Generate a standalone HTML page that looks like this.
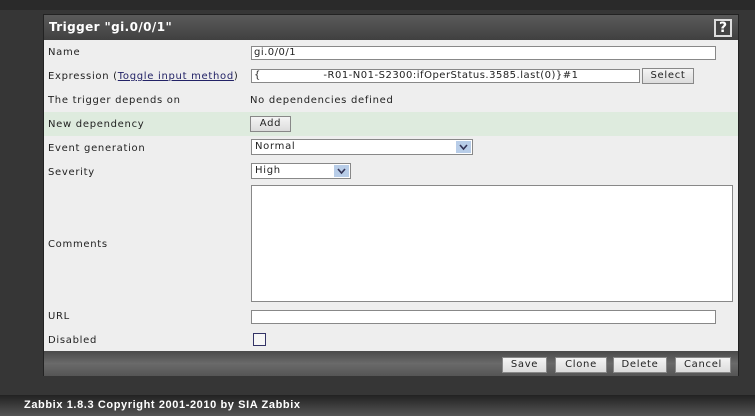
<!DOCTYPE html>
<html><head><style>
*{margin:0;padding:0;box-sizing:border-box}
body{width:755px;height:416px;background:#363636;font-family:"DejaVu Sans","Liberation Sans",sans-serif;font-size:10px;color:#222;position:relative;overflow:hidden;letter-spacing:0.7px}
.a{position:absolute}
.top{left:0;top:0;width:755px;height:10px;background:#2a2a2a}
.panel{left:43px;top:14px;width:696px;height:362px;background:#eee;border:1px solid #222}
.hdr{left:0;top:0;width:694px;height:25px;background:linear-gradient(#5a5a5a,#404040);color:#fff;font-weight:bold;font-size:12px;padding:5px 0 0 5px;letter-spacing:0.4px}
.help{right:6px;top:4px;width:18px;height:18px;border:2px solid #ddd;color:#fff;font-size:14px;font-weight:bold;text-align:center;line-height:14px;background:#444;letter-spacing:0}
.lbl{left:4px}
.inp{background:#fff;border:1px solid #888;height:14px;font-size:10px;padding-left:2px;line-height:12px;letter-spacing:0.5px}
.btn{background:linear-gradient(#f4f4f4,#dcdcdc);border:1px solid #888;height:16px;text-align:center;line-height:14px;font-size:10px}
.sel{background:#fff;border:1px solid #888;height:16px;line-height:14px;padding-left:3px}
.arr{position:absolute;right:1px;top:1px;width:15px;height:12px;background:#b8cde8}
.foot{left:0;top:336px;width:694px;height:25px;background:linear-gradient(#4a4a4a,#6a6a6a 50%,#555)}
.pf{left:0;top:395px;width:755px;height:21px;background:linear-gradient(#222,#555);color:#fff;font-weight:bold;padding:4px 0 0 24px;font-family:"Liberation Sans",sans-serif;font-size:11px;letter-spacing:0.6px}
</style></head><body>
<div class="a top"></div>
<div class="a panel">
 <div class="a hdr">Trigger "gi.0/0/1"<div class="a help">?</div></div>
 <div class="a lbl" style="top:32px">Name</div>
 <div class="a inp" style="left:207px;top:31px;width:465px">gi.0/0/1</div>
 <div class="a lbl" style="top:56px">Expression (<span style="color:#226;text-decoration:underline">Toggle input method</span>)</div>
 <div class="a inp" style="left:207px;top:54px;width:389px">{&nbsp;&nbsp;&nbsp;&nbsp;&nbsp;&nbsp;&nbsp;&nbsp;&nbsp;&nbsp;&nbsp;&nbsp;&nbsp;&nbsp;&nbsp;&nbsp;&nbsp;-R01-N01-S2300:ifOperStatus.3585.last(0)}#1</div>
 <div class="a btn" style="left:598px;top:53px;width:52px">Select</div>
 <div class="a lbl" style="top:80px">The trigger depends on</div>
 <div class="a" style="left:206px;top:80px">No dependencies defined</div>
 <div class="a" style="left:0;top:97px;width:694px;height:24px;background:#deebde"></div>
 <div class="a lbl" style="top:104px">New dependency</div>
 <div class="a btn" style="left:206px;top:101px;width:41px">Add</div>
 <div class="a lbl" style="top:128px">Event generation</div>
 <div class="a sel" style="left:207px;top:124px;width:222px">Normal<div class="arr"><svg width="15" height="12"><path d="M4 4l3.5 4 3.5-4" stroke="#335" stroke-width="1.6" fill="none"/></svg></div></div>
 <div class="a lbl" style="top:152px">Severity</div>
 <div class="a sel" style="left:207px;top:148px;width:100px">High<div class="arr"><svg width="15" height="12"><path d="M4 4l3.5 4 3.5-4" stroke="#335" stroke-width="1.6" fill="none"/></svg></div></div>
 <div class="a inp" style="left:207px;top:170px;width:482px;height:117px"></div>
 <div class="a lbl" style="top:224px">Comments</div>
 <div class="a lbl" style="top:296px">URL</div>
 <div class="a inp" style="left:207px;top:295px;width:465px"></div>
 <div class="a lbl" style="top:320px">Disabled</div>
 <div class="a" style="left:209px;top:318px;width:13px;height:13px;border:1px solid #336;background:#f6f6f6"></div>
 <div class="a foot">
  <div class="a btn" style="left:458px;top:6px;width:45px">Save</div>
  <div class="a btn" style="left:511px;top:6px;width:52px">Clone</div>
  <div class="a btn" style="left:569px;top:6px;width:54px">Delete</div>
  <div class="a btn" style="left:631px;top:6px;width:56px">Cancel</div>
 </div>
</div>
<div class="a pf">Zabbix 1.8.3 Copyright 2001-2010 by SIA Zabbix</div>
</body></html>
